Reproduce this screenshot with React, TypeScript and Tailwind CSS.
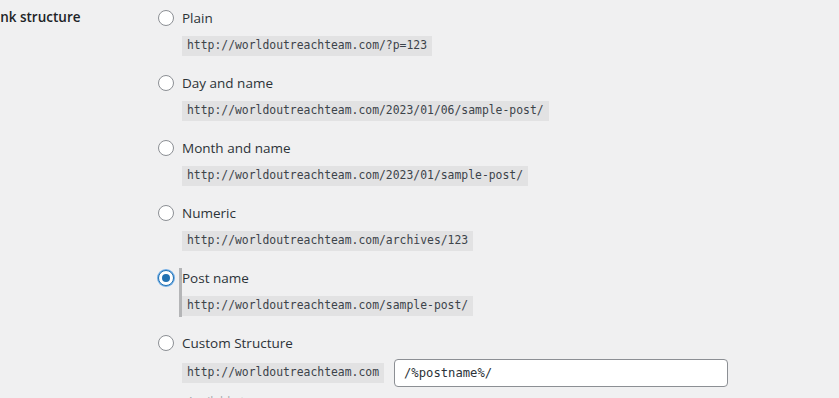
import React from 'react';

type Option = {
    id: string;
    label: string;
    example: string;
};

const options: Option[] = [
    { id: 'plain', label: 'Plain', example: 'http://worldoutreachteam.com/?p=123' },
    { id: 'day', label: 'Day and name', example: 'http://worldoutreachteam.com/2023/01/06/sample-post/' },
    { id: 'month', label: 'Month and name', example: 'http://worldoutreachteam.com/2023/01/sample-post/' },
    { id: 'numeric', label: 'Numeric', example: 'http://worldoutreachteam.com/archives/123' },
    { id: 'post', label: 'Post name', example: 'http://worldoutreachteam.com/sample-post/' },
];

const Radio: React.FC<{ checked: boolean }> = ({ checked }) => (
    <span
        className={`flex h-4 w-4 shrink-0 items-center justify-center rounded-full border bg-white ${
            checked ? 'border-[#2271b1] shadow-[0_0_0_1px_#72aee6]' : 'border-[#8c8f94]'
        }`}
    >
        {checked && <span className="h-2 w-2 rounded-full bg-[#2271b1]" />}
    </span>
);

const Code: React.FC<{ children: React.ReactNode }> = ({ children }) => (
    <code className="inline-flex h-[20px] items-center bg-[#e2e2e3] px-[5px] text-[11.4px] text-[#3c434a] [font-family:'DejaVu_Sans_Mono','Liberation_Mono',monospace]">
        {children}
    </code>
);

const App: React.FC = () => {
    const selected = 'post';

    return (
        <div className="flex h-[398px] w-[839px] overflow-hidden bg-[#f0f0f1] text-[13.5px] text-[#2c3338] [font-family:'Open_Sans','Noto_Sans',sans-serif]">
            <div className="w-[158px] shrink-0 pt-[7px]">
                <div className="-ml-[50px] whitespace-nowrap font-semibold text-[#1d2327]">Permalink structure</div>
            </div>
            <div className="flex-1 pt-[8px]">
                {options.map(opt => {
                    const isChecked = opt.id === selected;
                    return (
                        <div key={opt.id} className="flex h-[65px]">
                            <div className="flex h-[20px] w-[24px] shrink-0 items-center">
                                <Radio checked={isChecked} />
                            </div>
                            <div
                                className={`-ml-[3px] self-start border-l-[3px] ${
                                    isChecked ? 'border-[#b4b5b7]' : 'border-transparent'
                                }`}
                            >
                                <div className="flex h-[20px] items-center">{opt.label}</div>
                                <div className="mt-[6px] pb-[1px]">
                                    <Code>{opt.example}</Code>
                                </div>
                            </div>
                        </div>
                    );
                })}
                <div className="flex">
                    <div className="flex h-[20px] w-[24px] shrink-0 items-center">
                        <Radio checked={false} />
                    </div>
                    <div>
                        <div className="flex h-[20px] items-center">Custom Structure</div>
                        <div className="mt-[6px] flex items-center gap-[10px]">
                            <Code>http://worldoutreachteam.com</Code>
                            <input
                                type="text"
                                defaultValue="/%postname%/"
                                className="h-[28px] w-[334px] rounded-[4px] border border-[#8c8f94] bg-white px-[9px] text-[12.2px] text-[#2c3338] outline-none [font-family:'DejaVu_Sans_Mono','Liberation_Mono',monospace]"
                            />
                        </div>
                        <div className="mt-[6px] pl-[5px] text-[12px] text-[#a7aaad]">Available tags:</div>
                    </div>
                </div>
            </div>
        </div>
    );
};

export default App;
